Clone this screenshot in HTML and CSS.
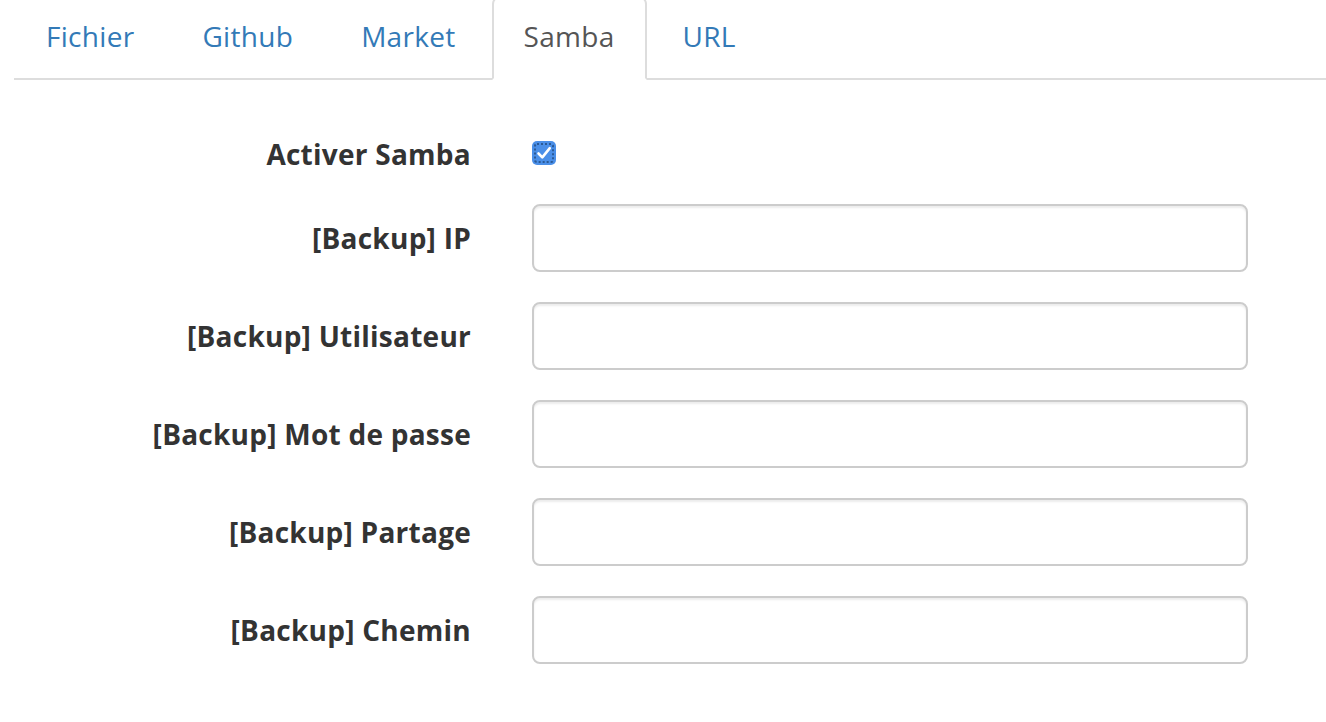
FILE: index.html
```html
<!DOCTYPE html>
<html lang="fr">
<head>
<meta charset="utf-8">
<title>Samba</title>
<link rel="stylesheet" href="styles.css">
</head>
<body>
<ul class="tabs">
  <li class="tab"><a href="#">Fichier</a></li>
  <li class="tab"><a href="#">Github</a></li>
  <li class="tab"><a href="#">Market</a></li>
  <li class="tab active"><a href="#">Samba</a></li>
  <li class="tab"><a href="#">URL</a></li>
</ul>
<form class="form">
  <div class="row">
    <label class="label">Activer Samba</label>
    <div class="field check-field">
      <span class="checkbox">
        <svg viewBox="0 0 24 24" width="24" height="24" aria-hidden="true">
          <path d="M6.5 12.5 L10.3 16.3 L17.8 7.2" fill="none" stroke="#fff" stroke-width="2.6" stroke-linecap="round" stroke-linejoin="round"/>
        </svg>
      </span>
    </div>
  </div>
  <div class="row">
    <label class="label">[Backup] IP</label>
    <div class="field"><input class="input" type="text"></div>
  </div>
  <div class="row">
    <label class="label">[Backup] Utilisateur</label>
    <div class="field"><input class="input" type="text"></div>
  </div>
  <div class="row">
    <label class="label">[Backup] Mot de passe</label>
    <div class="field"><input class="input" type="password"></div>
  </div>
  <div class="row">
    <label class="label">[Backup] Partage</label>
    <div class="field"><input class="input" type="text"></div>
  </div>
  <div class="row">
    <label class="label">[Backup] Chemin</label>
    <div class="field"><input class="input" type="text"></div>
  </div>
</form>
</body>
</html>
```
FILE: styles.css
```css
* { box-sizing: border-box; }
html, body { margin: 0; padding: 0; background: #fff; }
body {
  font-family: "Open Sans", "Noto Sans", sans-serif;
  color: #333;
  overflow: hidden;
}
.tabs {
  list-style: none;
  margin: -4px 0 0 14px;
  padding: 0;
  display: flex;
  border-bottom: 2px solid #ddd;
}
.tab { margin-bottom: -2px; margin-right: 4px; }
.tab a {
  display: block;
  padding: 18px 30px 22px;
  font-size: 28px;
  line-height: 40px;
  letter-spacing: 0.3px;
  color: #337ab7;
  text-decoration: none;
  border: 2px solid transparent;
  border-radius: 8px 8px 0 0;
}
.tab.active a {
  color: #555;
  background: #fff;
  border-color: #ddd #ddd transparent;
}
.form {
  padding-top: 40px;
  display: flex;
  flex-direction: column;
  gap: 30px;
}
.row {
  display: grid;
  grid-template-columns: 471px 716px;
  column-gap: 61px;
}
.label {
  text-align: right;
  font-weight: 700;
  font-size: 28px;
  line-height: 40px;
  letter-spacing: 0.25px;
  padding-top: 14px;
}
.check-field { padding-top: 21px; }
.checkbox {
  display: block;
  width: 24px;
  height: 24px;
  border-radius: 5px;
  background: #4a8fe8;
  position: relative;
}
.checkbox::before {
  content: "";
  position: absolute;
  inset: 2px;
  border: 2px dotted #2b5a96;
  border-radius: 3px;
}
.checkbox svg { position: absolute; left: 0; top: 0; }
.input {
  display: block;
  width: 716px;
  height: 68px;
  border: 2px solid #ccc;
  border-radius: 8px;
  box-shadow: inset 0 2px 2px rgba(0,0,0,.075);
  font-family: inherit;
  font-size: 28px;
  padding: 12px 24px;
  background: #fff;
}
```
